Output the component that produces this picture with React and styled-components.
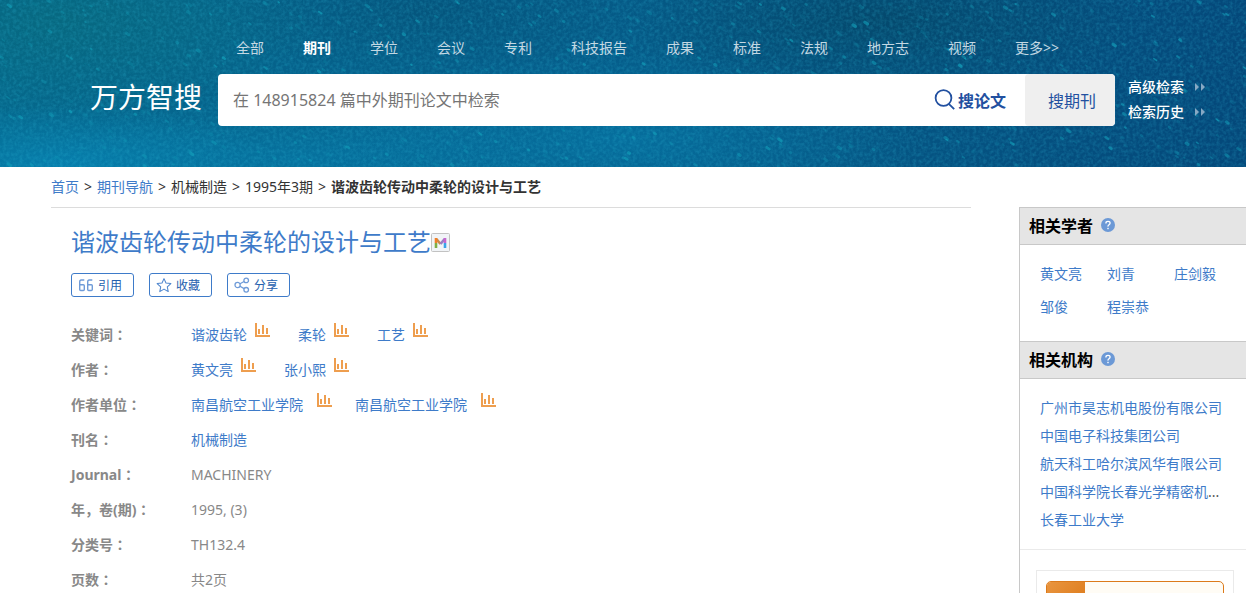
import React, { useMemo, useState } from 'react'
import styled, { createGlobalStyle } from 'styled-components'

const GlobalStyle = createGlobalStyle`
  * {
    box-sizing: border-box;
  }
  html {
    scrollbar-width: none;
  }
  body {
    margin: 0;
    background: #fff;
    color: #333;
    font-family: "Noto Sans", "Noto Sans CJK SC", sans-serif;
    font-size: 14px;
  }
  a {
    color: #3e7bc9;
    text-decoration: none;
  }
  ul {
    margin: 0;
    padding: 0;
    list-style: none;
  }
  button, input {
    font-family: inherit;
  }
`

const Header = styled.header`
  position: relative;
  overflow: hidden;
  padding: 34px 0 41px 90px;
  background: #056491;
`
const Sky = styled.svg`
  position: absolute;
  inset: 0;
  width: 100%;
  height: 100%;
`
const Nav = styled.nav`
  position: relative;
  display: flex;
  gap: 39px;
  height: 40px;
  padding-left: 146px;
  line-height: 28px;
`
const NavLink = styled.a`
  color: ${(props) => (props.$active ? '#fff' : '#c3d8e3')};
  font-weight: ${(props) => (props.$active ? 700 : 400)};
  white-space: nowrap;
`
const SearchRow = styled.div`
  position: relative;
  display: flex;
  align-items: center;
`
const Brand = styled.a`
  width: 128px;
  padding-bottom: 6px;
  color: #fff;
  font-size: 28px;
  line-height: 40px;
  white-space: nowrap;
`
const SearchForm = styled.form`
  display: flex;
  flex: 1;
  height: 52px;
  border-radius: 4px;
  background: #fff;
  overflow: hidden;
`
const SearchInput = styled.input`
  flex: 1;
  min-width: 0;
  padding: 0 15px;
  border: none;
  background: transparent;
  font-size: 16px;
  &:focus {
    outline: none;
  }
  &::placeholder {
    color: #757575;
    opacity: 1;
  }
`
const PaperButton = styled.button`
  display: flex;
  align-items: center;
  gap: 2px;
  padding: 0 19px 0 0;
  border: none;
  background: transparent;
  color: #2250a0;
  font-size: 16px;
  font-weight: 700;
`
const JournalButton = styled.button`
  width: 90px;
  padding: 0 0 0 4px;
  border: none;
  border-radius: 4px;
  background: #efefef;
  color: #2250a0;
  font-size: 16px;
`
const SideLinks = styled.div`
  width: 131px;
  padding: 0 0 2px 13px;
`
const SideLink = styled.a`
  display: flex;
  align-items: center;
  gap: 11px;
  color: #fff;
  font-weight: 500;
  line-height: 25px;
`

const Content = styled.div`
  display: flex;
  gap: 48px;
  padding-left: 51px;
`
const Main = styled.main`
  flex: 1;
  min-width: 0;
`
const Breadcrumb = styled.nav`
  display: flex;
  gap: 5px;
  border-bottom: 1px solid #dcdcdc;
  line-height: 40px;
  white-space: nowrap;
`
const Article = styled.article`
  padding: 16px 0 0 20px;
`
const Title = styled.h1`
  display: flex;
  align-items: center;
  margin: 0;
  color: #3e7bc9;
  font-size: 24px;
  font-weight: 400;
  line-height: 36px;
`
const Actions = styled.div`
  display: flex;
  gap: 15px;
  margin: 13px 0 20px;
`
const ActionButton = styled.button`
  display: flex;
  align-items: center;
  gap: 4px;
  width: 63px;
  height: 24px;
  padding: 0 0 0 6px;
  border: 1px solid #3e7bc9;
  border-radius: 3px;
  background: #fff;
  color: #2560ae;
  font-size: 12px;
`
const Field = styled.div`
  display: flex;
  color: #888;
  line-height: 35px;
`
const FieldName = styled.div`
  width: 120px;
  font-weight: 700;
`
const Colon = styled.span`
  font-family: "Noto Sans CJK TC", sans-serif;
`
const FieldValue = styled.div`
  display: flex;
  gap: ${(props) => (props.$wide ? '23px' : '28px')};
`
const Entry = styled.span`
  display: flex;
  gap: ${(props) => (props.$wide ? '14px' : '8px')};
  white-space: nowrap;
`
const ChartLink = styled.a`
  display: flex;
  padding-top: 6px;
`

const Aside = styled.aside`
  width: 227px;
  margin-top: 40px;
  border-left: 1px solid #c8c8c8;
`
const AsideTitle = styled.h2`
  display: flex;
  align-items: center;
  gap: 8px;
  height: 38px;
  margin: 0;
  padding: 0 0 2px 9px;
  border-top: 1px solid #c8c8c8;
  border-bottom: 1px solid #c8c8c8;
  background: #e5e5e5;
  color: #000;
  font-size: 16px;
  font-weight: 700;
`
const Scholars = styled.ul`
  display: grid;
  grid-template-columns: repeat(3, 67px);
  padding: 12px 0 18px 20px;
  line-height: 33px;
`
const Orgs = styled.ul`
  padding: 15px 20px;
  border-bottom: 1px solid #eaeaea;
  line-height: 28px;
`
const Org = styled.li`
  color: #555;
  white-space: nowrap;
`
const Promo = styled.div`
  margin: 20px 12px 0 16px;
  padding: 10px 9px;
  border: 1px solid #eaeaea;
`
const PromoCard = styled.div`
  display: flex;
  height: 40px;
  border: 1px solid #dc7a1b;
  border-radius: 5px;
  background: #fffcf5;
  overflow: hidden;
`
const PromoMark = styled.div`
  width: 38px;
  background: linear-gradient(135deg, #e9953f, #da7412);
`

const navItems = ['全部', '期刊', '学位', '会议', '专利', '科技报告', '成果', '标准', '法规', '地方志', '视频', '更多>>']

const fields = [
  { name: '关键词', entries: ['谐波齿轮', '柔轮', '工艺'] },
  { name: '作者', entries: ['黄文亮', '张小熙'] },
  { name: '作者单位', entries: ['南昌航空工业学院', '南昌航空工业学院'], wide: true },
  { name: '刊名', link: '机械制造' },
  { name: 'Journal', text: 'MACHINERY' },
  { name: '年，卷(期)', text: '1995, (3)' },
  { name: '分类号', text: 'TH132.4' },
  { name: '页数', text: '共2页' },
]

const scholars = ['黄文亮', '刘青', '庄剑毅', '邹俊', '程崇恭']

const orgs = [
  { name: '广州市昊志机电股份有限公司' },
  { name: '中国电子科技集团公司' },
  { name: '航天科工哈尔滨风华有限公司' },
  { name: '中国科学院长春光学精密机', more: true },
  { name: '长春工业大学' },
]

// Fixed seed, so the sky is the same on every load
const makeStars = (count) => {
  let seed = 71
  const next = () => {
    seed = (seed * 16807) % 2147483647
    return seed / 2147483647
  }
  return Array.from({ length: count }, (_, id) => ({
    id,
    x: next() * 1246,
    y: next() * 167,
    len: 0.6 + next() * 2.2,
    width: 1.4 + next() * 1.8,
    opacity: 0.12 + next() * next() * 0.6,
  }))
}

const StarrySky = () => {
  const stars = useMemo(() => makeStars(750), [])

  return (
    <Sky viewBox="0 0 1246 167" preserveAspectRatio="xMidYMid slice" aria-hidden="true">
      <defs>
        <linearGradient id="base" x1="0" y1="0" x2="1" y2="0">
          <stop offset="0" stopColor="#05688d" />
          <stop offset="0.4" stopColor="#055e8b" />
          <stop offset="0.7" stopColor="#055583" />
          <stop offset="1" stopColor="#04487a" />
        </linearGradient>
        <radialGradient id="glow">
          <stop offset="0" stopColor="#0784b4" stopOpacity="0.8" />
          <stop offset="1" stopColor="#0784b4" stopOpacity="0" />
        </radialGradient>
        <radialGradient id="teal">
          <stop offset="0" stopColor="#086a7c" stopOpacity="0.7" />
          <stop offset="1" stopColor="#086a7c" stopOpacity="0" />
        </radialGradient>
        <radialGradient id="dark">
          <stop offset="0" stopColor="#044668" stopOpacity="0.8" />
          <stop offset="1" stopColor="#044668" stopOpacity="0" />
        </radialGradient>
        <filter id="grain" x="0" y="0" width="100%" height="100%">
          <feTurbulence type="fractalNoise" baseFrequency="0.3" numOctaves="2" seed="4" />
          <feColorMatrix values="0 0 0 0 0.03  0 0 0 0 0.5  0 0 0 0 0.7  1.4 0 0 0 -0.5" />
        </filter>
      </defs>
      <rect width="1246" height="167" fill="url(#base)" />
      <ellipse cx="60" cy="20" rx="260" ry="100" fill="url(#teal)" />
      <ellipse cx="430" cy="10" rx="220" ry="70" fill="url(#dark)" opacity="0.5" />
      <ellipse cx="880" cy="20" rx="260" ry="80" fill="url(#dark)" />
      <ellipse cx="60" cy="165" rx="220" ry="60" fill="url(#glow)" />
      <ellipse cx="300" cy="160" rx="260" ry="60" fill="url(#glow)" opacity="0.6" />
      <ellipse cx="620" cy="140" rx="300" ry="90" fill="url(#glow)" opacity="0.6" />
      <rect width="1246" height="167" filter="url(#grain)" opacity="0.35" />
      {stars.map((star) => (
        <path
          key={star.id}
          d={`M${star.x} ${star.y}l${star.len} ${star.len * 0.7}`}
          stroke="#14a6bf"
          strokeWidth={star.width}
          strokeLinecap="round"
          opacity={star.opacity}
        />
      ))}
    </Sky>
  )
}

const SearchIcon = () => (
  <svg width="22" height="22" viewBox="0 0 22 22" fill="none" stroke="#2250a0" strokeWidth="1.8">
    <circle cx="9.5" cy="9" r="7.9" />
    <path d="M14.8 14.8l5.4 5.4" />
  </svg>
)

const DoubleArrow = () => (
  <svg width="11" height="8" viewBox="0 0 11 8" fill="#87a9c4">
    <path d="M0 0l4 4-4 4zM6 0l4 4-4 4z" />
  </svg>
)

const QuoteIcon = () => (
  <svg width="16" height="16" viewBox="0 0 16 16" fill="none" stroke="#6f9bd8" strokeWidth="1.4">
    <path d="M6.3 3H3.2Q1.7 3 1.7 5V12.5Q1.7 13.5 2.7 13.5H5.3Q6.3 13.5 6.3 12.5V8.7Q6.3 7.7 5.3 7.7H1.7" />
    <path d="M14.3 3h-3.1Q9.7 3 9.7 5v7.5q0 1 1 1h2.6q1 0 1-1V8.7q0-1-1-1H9.7" />
  </svg>
)

const StarIcon = () => (
  <svg width="16" height="16" viewBox="0 0 17 16" fill="none" stroke="#4c84cd" strokeWidth="1.1" strokeLinejoin="round">
    <path d="M8.5 1.2l2.1 4.7 5.2.6-3.8 3.4 1 5.1-4.5-2.6L4 15l1-5.1L1.2 6.5l5.2-.6z" />
  </svg>
)

const ShareIcon = () => (
  <svg width="16" height="16" viewBox="0 0 16 16" fill="none" stroke="#6f9bd8" strokeWidth="1.3">
    <circle cx="3.6" cy="8" r="2.6" />
    <circle cx="12.2" cy="3.4" r="2.3" />
    <circle cx="12.2" cy="12.8" r="2.3" />
    <path d="M6 6.8l4.1-2.3M6 9.2l4.1 2.4" />
  </svg>
)

const ChartIcon = () => (
  <svg width="15" height="15" viewBox="0 0 15 15" fill="#ee9e4f">
    <path d="M0 0h2v12h13v2H0zM3 6h2v5H3zM7 2h2v9H7zM11 5h2v6h-2z" />
  </svg>
)

const HelpIcon = () => (
  <svg width="14" height="14" viewBox="0 0 14 14">
    <circle cx="7" cy="7" r="7" fill="#6c99d6" />
    <path d="M4.9 5.4q0-2.1 2.1-2.1t2.1 1.8q0 1-1.1 1.7T7 8.6" fill="none" stroke="#fff" strokeWidth="1.3" />
    <rect x="6.3" y="9.8" width="1.4" height="1.4" fill="#fff" />
  </svg>
)

const BadgeIcon = () => (
  <svg width="19" height="19" viewBox="0 0 19 19">
    <rect x="0.5" y="0.5" width="18" height="18" rx="1" fill="#f1f4f7" stroke="#c2c2c2" />
    <g fill="none" strokeWidth="2.6">
      <path d="M5.4 6l4.1 5" stroke="#c98a4a" />
      <path d="M9.5 11l4.1-5" stroke="#9a7fc4" />
      <path d="M5 10V5" stroke="#f07f28" />
      <path d="M5 15v-5" stroke="#7fae45" />
      <path d="M14 10V5" stroke="#c565cf" />
      <path d="M14 15v-5" stroke="#3aa3ea" />
    </g>
  </svg>
)

const App = () => {
  const [keyword, setKeyword] = useState('')

  return (
    <>
      <GlobalStyle />
      <Header>
        <StarrySky />
        <Nav>
          {navItems.map((item) => (
            <NavLink key={item} href="#" $active={item === '期刊'}>{item}</NavLink>
          ))}
        </Nav>
        <SearchRow>
          <Brand href="#">万方智搜</Brand>
          <SearchForm onSubmit={(e) => e.preventDefault()}>
            <SearchInput
              aria-label="检索"
              placeholder="在 148915824 篇中外期刊论文中检索"
              value={keyword}
              onChange={(e) => setKeyword(e.target.value)} />
            <PaperButton type="submit"><SearchIcon />搜论文</PaperButton>
            <JournalButton type="button">搜期刊</JournalButton>
          </SearchForm>
          <SideLinks>
            <SideLink href="#">高级检索<DoubleArrow /></SideLink>
            <SideLink href="#">检索历史<DoubleArrow /></SideLink>
          </SideLinks>
        </SearchRow>
      </Header>

      <Content>
        <Main>
          <Breadcrumb>
            <a href="#">首页</a>
            <span>&gt;</span>
            <a href="#">期刊导航</a>
            <span>&gt;</span>
            <span>机械制造</span>
            <span>&gt;</span>
            <span>1995年3期</span>
            <span>&gt;</span>
            <strong>谐波齿轮传动中柔轮的设计与工艺</strong>
          </Breadcrumb>
          <Article>
            <Title>谐波齿轮传动中柔轮的设计与工艺<BadgeIcon /></Title>
            <Actions>
              <ActionButton type="button"><QuoteIcon />引用</ActionButton>
              <ActionButton type="button"><StarIcon />收藏</ActionButton>
              <ActionButton type="button"><ShareIcon />分享</ActionButton>
            </Actions>
            {fields.map((field) => (
              <Field key={field.name}>
                <FieldName>{field.name}<Colon>：</Colon></FieldName>
                <FieldValue $wide={field.wide}>
                  {field.entries?.map((entry, i) => (
                    <Entry key={i} $wide={field.wide}>
                      <a href="#">{entry}</a>
                      <ChartLink href="#" aria-label={entry}><ChartIcon /></ChartLink>
                    </Entry>
                  ))}
                  {field.link && <a href="#">{field.link}</a>}
                  {field.text}
                </FieldValue>
              </Field>
            ))}
          </Article>
        </Main>

        <Aside>
          <AsideTitle>相关学者<HelpIcon /></AsideTitle>
          <Scholars>
            {scholars.map((name) => (
              <li key={name}><a href="#">{name}</a></li>
            ))}
          </Scholars>
          <AsideTitle>相关机构<HelpIcon /></AsideTitle>
          <Orgs>
            {orgs.map((org) => (
              <Org key={org.name}><a href="#">{org.name}</a>{org.more && '...'}</Org>
            ))}
          </Orgs>
          <Promo>
            <PromoCard>
              <PromoMark />
            </PromoCard>
          </Promo>
        </Aside>
      </Content>
    </>
  )
}

export default App
